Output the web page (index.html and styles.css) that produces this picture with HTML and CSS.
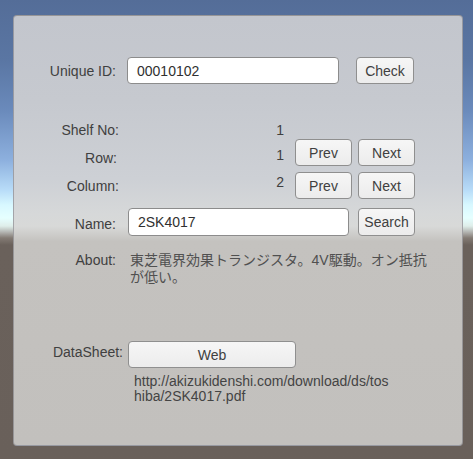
FILE: index.html
```html
<!DOCTYPE html>
<html lang="ja">
<head>
<meta charset="utf-8">
<title>Parts</title>
<link rel="stylesheet" href="styles.css">
</head>
<body>
<div class="panel">
  <div class="row row-id">
    <div class="label w102 mid">Unique ID:</div>
    <div class="field f-id">00010102</div>
    <div class="btn b-check">Check</div>
  </div>

  <div class="row row-shelf">
    <div class="label w105">Shelf No:</div>
    <div class="value v165">1</div>
  </div>

  <div class="row row-nav">
    <div class="label w103 lab-row">Row:</div>
    <div class="value v167 val-row">1</div>
    <div class="btn b-nav b-first">Prev</div>
    <div class="btn b-nav b-second">Next</div>
  </div>

  <div class="row row-nav row-col">
    <div class="label w105 lab-col">Column:</div>
    <div class="value v165 val-col">2</div>
    <div class="btn b-nav b-first">Prev</div>
    <div class="btn b-nav b-second">Next</div>
  </div>

  <div class="row row-name">
    <div class="label w102 lab-name">Name:</div>
    <div class="field f-name">2SK4017</div>
    <div class="btn b-search">Search</div>
  </div>

  <div class="row row-about">
    <div class="label w102">About:</div>
    <div class="about">東芝電界効果トランジスタ。4V駆動。オン抵抗が低い。</div>
  </div>

  <div class="row row-sheet">
    <div class="label w109 lab-sheet">DataSheet:</div>
    <div class="btn b-web">Web</div>
  </div>

  <div class="url">http://akizukidenshi.com/download/ds/toshiba/2SK4017.pdf</div>
</div>
</body>
</html>
```

FILE: styles.css
```css
html, body {
  margin: 0;
  padding: 0;
}

body {
  width: 473px;
  height: 459px;
  overflow: hidden;
  font-family: "Liberation Sans", "Noto Sans CJK JP", sans-serif;
  font-size: 14px;
  color: #404040;
  background: linear-gradient(to bottom,
    #546d98 0px,
    #5a76a3 60px,
    #6a8abb 110px,
    #8db0de 160px,
    #b8dcf8 190px,
    #d8f8ff 205px,
    #e6ffff 218px,
    #dfeeea 226px,
    #b4b5b2 232px,
    #837b74 238px,
    #6a615b 245px,
    #69605a 459px);
  padding-top: 15px;
  box-sizing: border-box;
}

.panel {
  margin-left: 13px;
  width: 450px;
  height: 431px;
  box-sizing: border-box;
  border: 1px solid rgba(70, 70, 80, 0.35);
  border-radius: 4px;
  background: linear-gradient(to bottom,
    #c3c6cd 0%,
    #c6c9cf 20%,
    #cdd0d5 38%,
    #d6d8d9 46%,
    #d8d9d8 49%,
    #c4c2bf 52.5%,
    #c2c0bd 100%);
  display: flex;
  flex-direction: column;
}

.row {
  display: flex;
  align-items: center;
  flex: none;
}

.label {
  flex: none;
  text-align: right;
  line-height: 16px;
  white-space: nowrap;
}

.w102 { width: 102px; }
.w103 { width: 103px; }
.w105 { width: 105px; }
.w109 { width: 109px; }

.value {
  flex: none;
  text-align: right;
  line-height: 16px;
}

.v165 { width: 165px; }
.v167 { width: 167px; }

.field {
  flex: none;
  box-sizing: border-box;
  background: #ffffff;
  border: 1px solid #8c8c8c;
  border-radius: 4px;
  color: #303030;
  padding-left: 9px;
  display: flex;
  align-items: center;
}

.btn {
  flex: none;
  box-sizing: border-box;
  background: linear-gradient(to bottom, #f6f6f6, #ececec);
  border: 1px solid #8f8f8f;
  border-radius: 4px;
  color: #404040;
  display: flex;
  align-items: center;
  justify-content: center;
}

/* Unique ID row */
.row-id {
  margin-top: 41px;
  height: 27px;
}
.f-id {
  margin-left: 11px;
  width: 212px;
  height: 27px;
}
.b-check {
  margin-left: 17px;
  width: 58px;
  height: 27px;
}

/* Shelf row */
.row-shelf {
  margin-top: 37px;
  height: 18px;
}

/* Nav rows */
.row-nav {
  height: 27px;
  align-items: flex-start;
}
.row-col {
  margin-top: 6px;
}
.b-nav {
  width: 57px;
  height: 27px;
}
.b-first { margin-left: 11px; }
.b-second { margin-left: 6px; }

.lab-row { margin-top: 11px; }
.val-row { margin-top: 8px; }
.lab-col { margin-top: 6px; }
.val-col { margin-top: 2px; }

/* Name row */
.row-name {
  margin-top: 9px;
  height: 28px;
  align-items: flex-start;
}
.lab-name { margin-top: 8px; }
.f-name {
  margin-left: 12px;
  width: 221px;
  height: 28px;
}
.b-search {
  margin-left: 9px;
  width: 57px;
  height: 28px;
}

/* About row */
.row-about {
  margin-top: 16px;
  align-items: flex-start;
}
.row-about .label {
  line-height: 17px;
}
.about {
  margin-left: 14px;
  width: 300px;
  line-height: 17px;
  color: #505050;
  word-break: break-all;
}

/* DataSheet row */
.row-sheet {
  margin-top: 55px;
  height: 27px;
  align-items: flex-start;
}
.lab-sheet { margin-top: 3px; }
.b-web {
  margin-left: 5px;
  width: 168px;
  height: 27px;
}

.url {
  margin-top: 6px;
  margin-left: 120px;
  width: 262px;
  font-size: 14px;
  line-height: 15px;
  color: #444444;
  word-break: break-all;
}
```
